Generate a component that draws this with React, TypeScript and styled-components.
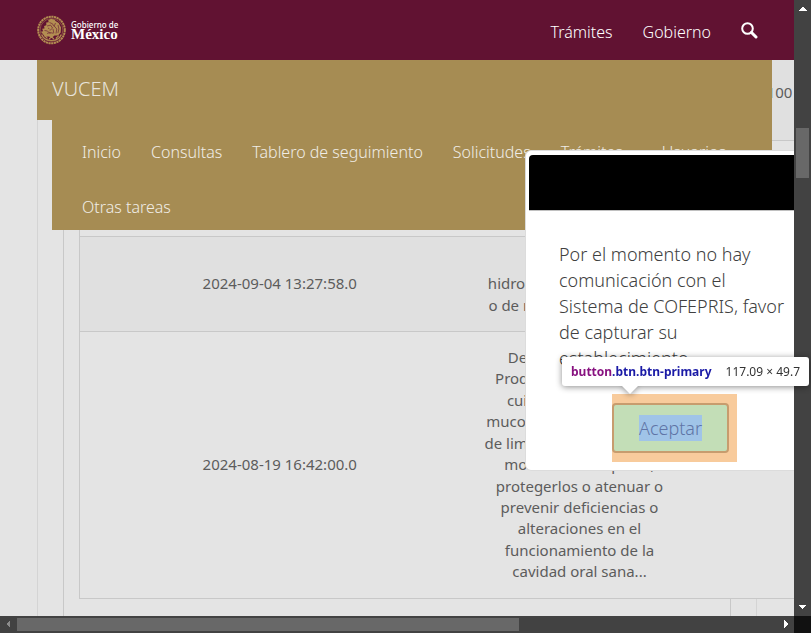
import React from "react";
import styled, { createGlobalStyle } from "styled-components";

const GlobalStyle = createGlobalStyle`
  *, *::before, *::after { box-sizing: border-box; }
  body {
    margin: 0;
    font-family: "Noto Sans", "Open Sans", sans-serif;
    font-size: 15px;
    line-height: 1.43;
    color: #5c5c5c;
    overflow: hidden;
  }
  p, h1, ul { margin: 0; padding: 0; }
`;

const Shell = styled.div`
  position: relative;
  display: grid;
  grid-template-columns: minmax(0, 1fr) 17px;
  grid-template-rows: minmax(0, 1fr) 17px;
  height: 100vh;
`;

const Viewport = styled.div`
  position: relative;
  overflow: hidden;
  background: #e4e4e4;
`;

/* Fixed site header */
const Header = styled.header`
  position: absolute;
  inset: 0 0 auto 0;
  z-index: 2;
  display: flex;
  align-items: center;
  justify-content: space-between;
  height: 60px;
  padding: 0 36px 0 37px;
  background: #611232;
`;

const LogoLink = styled.a`
  display: flex;
  align-items: center;
  gap: 4px;
  color: #fff;
  text-decoration: none;
`;

const LogoText = styled.span`
  display: flex;
  flex-direction: column;
  font-family: "Noto Sans", sans-serif;
  font-size: 8px;
  font-weight: 500;
  line-height: 8px;
`;

const LogoName = styled.strong`
  font-family: "Liberation Serif", serif;
  font-size: 15px;
  line-height: 10px;
`;

const SiteNav = styled.nav`
  display: flex;
  align-items: center;
  gap: 30px;
  padding-top: 4px;
`;

const NavLink = styled.a<{ $muted?: boolean }>`
  font-size: 16px;
  line-height: 25px;
  font-weight: 300;
  color: ${(p) => (p.$muted ? "#f0ede6" : "#fff")};
  text-decoration: none;
  white-space: nowrap;
`;

const SearchButton = styled.button`
  display: flex;
  padding: 0 0 3px;
  border: 0;
  background: none;
  color: #fff;
`;

/* Application menu, floating over the page */
const AppMenu = styled.nav`
  position: absolute;
  top: 60px;
  left: 37px;
  right: 22px;
  z-index: 2;
`;

const Brand = styled.a`
  display: flex;
  align-items: center;
  height: 60px;
  padding: 0 15px 2px;
  background: #a68c53;
  color: #e8e4dc;
  font-size: 20px;
  font-weight: 300;
  text-decoration: none;
`;

const MenuList = styled.ul`
  display: flex;
  flex-wrap: wrap;
  margin-left: 15px;
  padding: 0 15px;
  background: #a68c53;
  list-style: none;
`;

const MenuItem = styled.li<{ $wide?: boolean }>`
  display: flex;
  align-items: center;
  height: 55px;
  padding: 10px ${(p) => (p.$wide ? 24 : 15)}px 0 15px;
`;

/* Page content */
const OuterPanel = styled.main`
  height: 100%;
  margin: 0 37px;
  padding: 0 25px;
  border: solid #d4d4d4;
  border-width: 0 1px;
`;

const InnerPanel = styled.section`
  height: 100%;
  padding: 45px 15px 0;
  border: solid #c8c8c8;
  border-width: 0 1px;
`;

const Table = styled.table`
  position: relative;
  width: 1000px;
  table-layout: fixed;
  border-collapse: collapse;
  border: 1px solid #c8c8c8;
  background: #e4e4e4;
`;

const Row = styled.tr`
  &:nth-child(odd) { background: #e0e0e0; }
`;

const Cell = styled.td`
  padding: 15px 5px;
  border-bottom: 1px solid #c8c8c8;
  text-align: center;
  vertical-align: middle;
  white-space: pre;
`;

const Col = styled.col<{ $w: number }>`
  width: ${(p) => p.$w}px;
`;

/* Dialog */
const Dialog = styled.div`
  position: absolute;
  top: 150px;
  right: -32px;
  z-index: 3;
  width: 301px;
  padding: 4px 4px 8px 3px;
  border: 1px solid #dcdcdc;
  border-width: 1px 0 1px 1px;
  border-radius: 6px;
  background: #fff;
`;

const DialogHeader = styled.div`
  height: 56px;
  border-bottom: 1px solid #c0c0c0;
  border-radius: 4px 4px 0 0;
  background: #000;
`;

const DialogText = styled.p`
  padding: 30px 30px 23px;
  font-size: 18px;
  font-weight: 300;
  line-height: 26px;
  color: #404040;
`;

const DialogActions = styled.div`
  display: flex;
  justify-content: center;
  padding-right: 2px;
`;

const ButtonMargin = styled.div`
  padding: 9px 8px 9px 0;
  background: #f8cb9c;
`;

const AcceptButton = styled.button`
  width: 117px;
  height: 50px;
  padding: 0;
  border: 2px solid #c79c6e;
  border-radius: 4px;
  background: #c3deb7;
  color: #5f74a6;
  font: 300 18px/26px "Noto Sans", sans-serif;
`;

const ButtonContent = styled.span`
  display: block;
  width: fit-content;
  margin: 0 auto;
  background: #a0c4e8;
`;

/* Element inspector label */
const Tooltip = styled.div`
  position: absolute;
  top: 357px;
  right: 2px;
  z-index: 4;
  display: flex;
  align-items: center;
  justify-content: space-between;
  width: 247px;
  height: 29px;
  padding: 0 9px;
  border-radius: 3px;
  background: #fff;
  color: #333;
  font-size: 12px;
  white-space: nowrap;
  filter: drop-shadow(0 1px 3px rgba(0, 0, 0, 0.45));

  &::after {
    content: "";
    position: absolute;
    top: 100%;
    left: 60px;
    border: 8px solid transparent;
    border-top-color: #fff;
    border-bottom: 0;
  }
`;

const TagName = styled.strong`
  color: #881280;
`;

const ClassName = styled.strong`
  color: #1a1aa6;
`;

/* Scroll bars */
const ScrollBar = styled.div<{ $vertical?: boolean }>`
  display: flex;
  flex-direction: ${(p) => (p.$vertical ? "column" : "row")};
  align-items: center;
  justify-content: space-between;
  background: #424242;
`;

const Track = styled.div<{ $vertical?: boolean }>`
  display: flex;
  flex: 1;
  flex-direction: ${(p) => (p.$vertical ? "column" : "row")};
  padding: ${(p) => (p.$vertical ? "111px 0 0" : "0")};
`;

const Thumb = styled.div<{ $vertical?: boolean }>`
  width: ${(p) => (p.$vertical ? "13px" : "66%")};
  height: ${(p) => (p.$vertical ? "50px" : "13px")};
  background: #686868;
`;

const ArrowBox = styled.span`
  display: flex;
  align-items: center;
  justify-content: center;
  width: 17px;
  height: 17px;
`;

const Corner = styled.div`
  background: #111;
`;

function Arrow({ points, color = "#fff" }: { points: string; color?: string }) {
  return (
    <ArrowBox>
      <svg width="17" height="17" viewBox="0 0 17 17" shapeRendering="crispEdges" aria-hidden="true">
        <polygon points={points} fill={color} />
      </svg>
    </ArrowBox>
  );
}

function Seal() {
  return (
    <svg width="30" height="30" viewBox="0 0 30 30" fill="none" stroke="#b38e52" aria-hidden="true">
      <circle cx="14.5" cy="15" r="13.3" strokeWidth="2" strokeDasharray="2.2 .5" />
      <circle cx="14.5" cy="15" r="11.4" strokeWidth=".5" />
      <path
        fill="#b38e52"
        stroke="none"
        d="M12.500 4.500c2.500-1 5.200-.2 6 1.400l3.200 2 2.300 4.600-.3 5-2.700 2.900-3.500.2-2.400 2-3.500-1-3.600.2-2.400-3-1.700-2 2.200-.6-.9-2.500 2.300-.1-.4-2.700 2.300-.7-.2-2.600 2.400-.3-.3-2.400z"
      />
      <path
        stroke="#611232"
        strokeWidth=".6"
        d="M12.5 7.500l3 1.300 1.400 2.600M10 11l3.600-.9 2 3-3 2.600M18.500 8l-1.300 3 2.600 3-.8 4.500M21 10l.9 4-1 4M7.500 15.500l3 .5 3 3M10 18.500l3-1 3.500.8M16 14l.8 4M11 13l1.500 1"
      />
      <path strokeWidth="1.100" d="M4.800 19.500c1.500 4 5.500 6 9.700 6s8.200-2 9.700-6M7.500 20.500l3 2.800M12 24l2.500-2 2.500 2M18.800 23.500l3-2.800" />
    </svg>
  );
}

const rows = [
  { date: "2024-09-10 10:05:31.0", text: "Crema\nhidratante para piel\nseca", status: "100" },
  { date: "2024-09-06 09:12:44.0", text: "Crema\nhidratante para piel\nseca", status: "" },
  { date: "2024-09-04 13:27:58.0", text: "Crema\nhidroalcohólicas, aceites y\no de manteca de semillas,", status: "" },
  {
    date: "2024-08-19 16:42:00.0",
    text:
      "Dentífricos y cremas\nProductos destinados al\ncuidado de dientes y\nmucosa bucal con el fin de\nde limpiarlos, perfumarlos,\nmodificar su aspecto,\nprotegerlos o atenuar o\nprevenir deficiencias o\nalteraciones en el\nfuncionamiento de la\ncavidad oral sana...",
    status: "",
  },
];

const menu = [
  { label: "Inicio" },
  { label: "Consultas" },
  { label: "Tablero de seguimiento" },
  { label: "Solicitudes" },
  { label: "Trámites", wide: true },
  { label: "Usuarios" },
  { label: "Otras tareas" },
];

export default function App() {
  return (
    <Shell>
      <GlobalStyle />
      <Viewport>
        <Header>
          <LogoLink href="#" aria-label="Gobierno de México">
            <Seal />
            <LogoText>
              Gobierno de
              <LogoName>México</LogoName>
            </LogoText>
          </LogoLink>
          <SiteNav>
            <NavLink href="#">Trámites</NavLink>
            <NavLink href="#">Gobierno</NavLink>
            <SearchButton type="button" aria-label="Buscar">
              <svg width="17" height="17" viewBox="0 0 17 17" fill="none" stroke="currentColor" aria-hidden="true">
                <circle cx="6.5" cy="6.5" r="5.3" strokeWidth="2" />
                <path d="M10.500 10.500l4.500 4.500" strokeWidth="3" strokeLinecap="round" />
              </svg>
            </SearchButton>
          </SiteNav>
        </Header>

        <AppMenu>
          <Brand href="#">VUCEM</Brand>
          <MenuList>
            {menu.map((item) => (
              <MenuItem key={item.label} $wide={item.wide}>
                <NavLink href="#" $muted>{item.label}</NavLink>
              </MenuItem>
            ))}
          </MenuList>
        </AppMenu>

        <OuterPanel>
          <InnerPanel>
            <Table>
              <colgroup>
                <Col $w={400} />
                <Col $w={200} />
                <Col $w={200} />
                <Col $w={200} />
              </colgroup>
              <tbody>
                {rows.map((row) => (
                  <Row key={row.date}>
                    <Cell>{row.date}</Cell>
                    <Cell>{row.text}</Cell>
                    <Cell>{row.status}</Cell>
                    <Cell />
                  </Row>
                ))}
              </tbody>
            </Table>
          </InnerPanel>
        </OuterPanel>

        <Dialog role="dialog" aria-label="Aviso">
          <DialogHeader />
          <DialogText>
            Por el momento no hay comunicación con el Sistema de COFEPRIS, favor de capturar su establecimiento.
          </DialogText>
          <DialogActions>
            <ButtonMargin>
              <AcceptButton type="button">
                <ButtonContent>Aceptar</ButtonContent>
              </AcceptButton>
            </ButtonMargin>
          </DialogActions>
        </Dialog>
      </Viewport>

      <ScrollBar $vertical>
        <Arrow points="4,11 8,7 9,7 13,11" />
        <Track $vertical>
          <Thumb $vertical />
        </Track>
        <Arrow points="4,6 12,6 8,10" />
      </ScrollBar>
      <ScrollBar>
        <Arrow points="10,4 10,12 6,8" color="#8c8c8c" />
        <Track>
          <Thumb />
        </Track>
        <Arrow points="7,4 7,12 11,8" />
      </ScrollBar>
      <Corner />

      <Tooltip role="tooltip">
        <span>
          <TagName>button</TagName>
          <ClassName>.btn.btn-primary</ClassName>
        </span>
        <span>117.09 × 49.7</span>
      </Tooltip>
    </Shell>
  );
}
